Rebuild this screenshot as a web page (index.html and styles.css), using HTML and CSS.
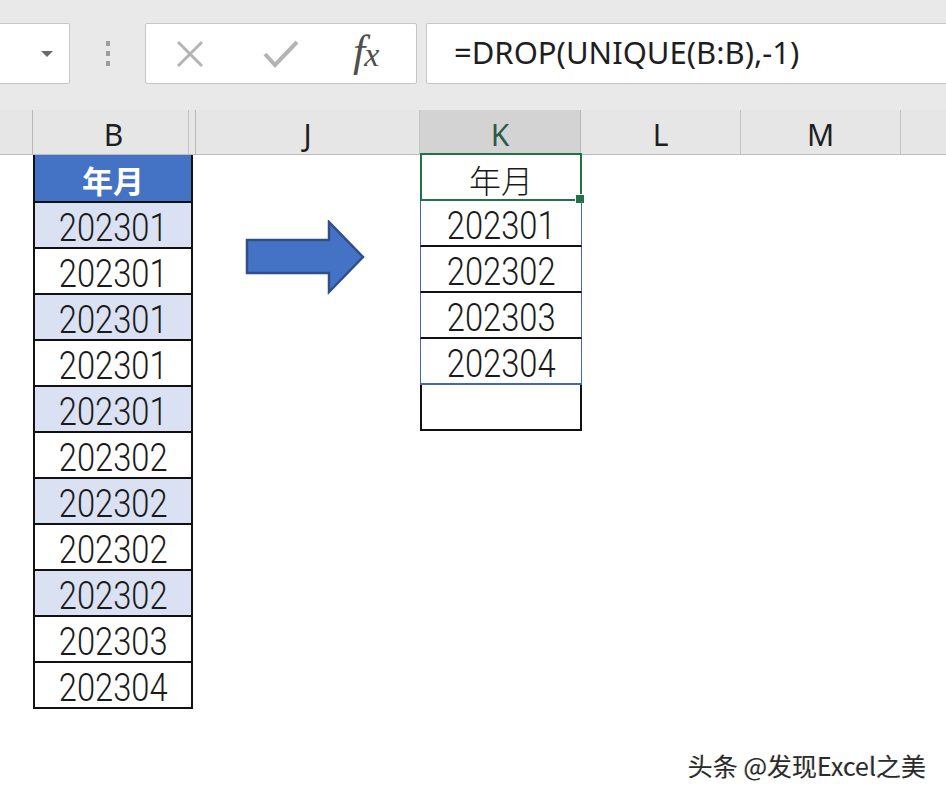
FILE: index.html
```html
<!DOCTYPE html>
<html lang="zh-CN">
<head>
    <meta charset="UTF-8">
    <title>DROP UNIQUE</title>
    <link rel="stylesheet" href="styles.css">
</head>
<body>

    <!-- Formula bar -->
    <div class="toolbar">
        <div class="name-box">
            <span class="caret"></span>
        </div>
        <div class="grip">
            <span></span><span></span><span></span>
        </div>
        <div class="fx-buttons">
            <svg class="btn-icon" width="36" height="36" viewBox="0 0 36 36">
                <path d="M6 6 L30 30 M30 6 L6 30" stroke="#b4b4b4" stroke-width="3" fill="none"/>
            </svg>
            <svg class="btn-icon" width="38" height="36" viewBox="0 0 38 36">
                <path d="M3 18 L13 29 L35 6" stroke="#b4b4b4" stroke-width="4" fill="none"/>
            </svg>
            <span class="fx">f<small>x</small></span>
        </div>
        <div class="formula">=DROP(UNIQUE(B:B),-1)</div>
    </div>

    <!-- Column headers -->
    <div class="col-headers">
        <div class="corner"></div>
        <div class="col col-b">B</div>
        <div class="col col-gap"></div>
        <div class="col col-j">J</div>
        <div class="col col-k">K</div>
        <div class="col col-l">L</div>
        <div class="col col-m">M</div>
        <div class="col col-rest"></div>
    </div>

    <!-- Sheet -->
    <div class="sheet">
        <div class="range-b">
            <div class="cell head">年月</div>
            <div class="cell shade"><span class="num">202301</span></div>
            <div class="cell"><span class="num">202301</span></div>
            <div class="cell shade"><span class="num">202301</span></div>
            <div class="cell"><span class="num">202301</span></div>
            <div class="cell shade"><span class="num">202301</span></div>
            <div class="cell"><span class="num">202302</span></div>
            <div class="cell shade"><span class="num">202302</span></div>
            <div class="cell"><span class="num">202302</span></div>
            <div class="cell shade"><span class="num">202302</span></div>
            <div class="cell"><span class="num">202303</span></div>
            <div class="cell"><span class="num">202304</span></div>
        </div>

        <div class="arrow-col">
            <svg width="122" height="76" viewBox="0 0 122 76">
                <polygon points="2,20 84,20 84,2 118,37 84,72 84,53 2,53" fill="#4472c4" stroke="#2f4f8a" stroke-width="2.5" stroke-linejoin="miter"/>
            </svg>
        </div>

        <div class="range-k">
            <div class="kcell active">年月<span class="handle"></span></div>
            <div class="kcell spill"><span class="num">202301</span></div>
            <div class="kcell spill"><span class="num">202302</span></div>
            <div class="kcell spill"><span class="num">202303</span></div>
            <div class="kcell spill last"><span class="num">202304</span></div>
            <div class="kcell empty"></div>
        </div>
    </div>

    <div class="watermark">头条 @发现Excel之美</div>

</body>
</html>
```

FILE: styles.css
```css
body {
    margin: 0;
    padding: 0;
    width: 946px;
    height: 800px;
    overflow: hidden;
    background-color: #ffffff;
    font-family: "Noto Sans", "Noto Sans CJK SC", sans-serif;
    position: relative;
}

/* Formula bar */
.toolbar {
    height: 110px;
    background-color: #e9e9e9;
    display: flex;
    align-items: flex-start;
    padding-top: 23px;
    box-sizing: border-box;
}

.name-box {
    width: 72px;
    height: 61px;
    margin-left: -2px;
    background-color: #fff;
    border: 1px solid #c6c6c6;
    border-radius: 2px;
    box-sizing: border-box;
    display: flex;
    justify-content: flex-end;
    align-items: center;
    padding-right: 16px;
}

.caret {
    width: 0;
    height: 0;
    border-left: 6px solid transparent;
    border-right: 6px solid transparent;
    border-top: 6px solid #6a6a6a;
}

.grip {
    width: 75px;
    height: 61px;
    display: flex;
    flex-direction: column;
    align-items: center;
    justify-content: center;
    gap: 5px;
}

.grip span {
    width: 4px;
    height: 5px;
    background-color: #9c9c9c;
}

.fx-buttons {
    width: 272px;
    height: 61px;
    background-color: #fff;
    border: 1px solid #c6c6c6;
    border-radius: 2px;
    box-sizing: border-box;
    display: flex;
    align-items: center;
    padding-left: 26px;
}

.btn-icon:first-child {
    margin-right: 54px;
}

.fx {
    margin-left: 53px;
    margin-top: -4px;
    font-family: "Liberation Serif", "DejaVu Serif", serif;
    font-style: italic;
    font-size: 44px;
    color: #4f4f4f;
    letter-spacing: -1px;
}

.fx small {
    font-size: 34px;
}

.formula {
    flex: 1;
    height: 61px;
    margin-left: 9px;
    margin-right: -4px;
    background-color: #fff;
    border: 1px solid #c6c6c6;
    border-radius: 2px;
    box-sizing: border-box;
    padding-left: 27px;
    font-size: 31px;
    line-height: 57px;
    color: #1e1e1e;
}

/* Column headers */
.col-headers {
    height: 45px;
    display: flex;
    background-color: #e6e6e6;
    border-bottom: 1px solid #bdbdbd;
    box-sizing: border-box;
}

.corner {
    width: 33px;
    border-right: 1px solid #b8b8b8;
    box-sizing: border-box;
}

.col {
    box-sizing: border-box;
    border-right: 1px solid #c4c4c4;
    font-size: 30px;
    color: #1e1e1e;
    text-align: center;
    line-height: 50px;
}

.col-b { width: 156px; padding-left: 6px; }
.col-gap { width: 7px; border-right: 1px solid #b8b8b8; }
.col-j { width: 224px; }
.col-k { width: 161px; background-color: #d3d3d3; color: #2d5a48; border-right: 1px solid #b8b8b8; }
.col-l { width: 160px; }
.col-m { width: 160px; }
.col-rest { flex: 1; border-right: none; }

/* Sheet */
.sheet {
    display: flex;
    padding-left: 33px;
    font-size: 38px;
    color: #1a1a1a;
}

.num {
    display: inline-block;
    font-family: Roboto, "Liberation Sans", sans-serif;
    font-weight: 300;
    transform: scaleX(0.86);
}

.range-b {
    width: 160px;
    border: 2px solid #111;
    border-top: none;
    box-sizing: border-box;
}

.cell {
    height: 46px;
    border-top: 2px solid #111;
    box-sizing: border-box;
    text-align: center;
    line-height: 46px;
    background-color: #fff;
}

.cell:first-child {
    border-top: none;
}

.cell.head {
    background-color: #4472c4;
    color: #fff;
    font-weight: bold;
    font-size: 31px;
    line-height: 50px;
    font-family: "Noto Sans CJK SC", sans-serif;
}

.cell.shade {
    background-color: #d9e1f2;
}

.arrow-col {
    width: 227px;
    padding-top: 65px;
    padding-left: 52px;
    box-sizing: border-box;
}

.range-k {
    width: 162px;
}

.kcell {
    height: 46px;
    box-sizing: border-box;
    text-align: center;
    line-height: 46px;
    position: relative;
}

.kcell.active {
    border: 2px solid #217346;
    font-family: "Noto Sans CJK SC", sans-serif;
    font-weight: 300;
    font-size: 32px;
    margin-top: -2px;
    height: 48px;
    line-height: 48px;
}

.handle {
    position: absolute;
    right: -5px;
    bottom: -5px;
    width: 8px;
    height: 8px;
    background-color: #217346;
    border: 1px solid #fff;
}

.kcell.spill {
    border-left: 1.5px solid #3f68b8;
    border-right: 1.5px solid #3f68b8;
    border-bottom: 2px solid #111;
}

.kcell.spill.last {
    border-bottom: 2px solid #3f68b8;
}

.kcell.empty {
    border: 2px solid #111;
    border-top: none;
}

.watermark {
    position: absolute;
    right: 20px;
    bottom: 17px;
    font-family: "Noto Sans CJK SC", sans-serif;
    font-size: 25px;
    color: #2a2a2a;
    text-shadow: 1px 1px 0 #fff, -1px 0 0 #ddd;
}
```
